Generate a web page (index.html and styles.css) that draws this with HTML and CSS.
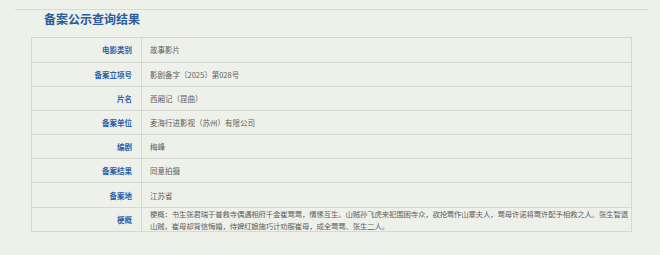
FILE: index.html
```html
<!DOCTYPE html>
<html lang="zh">
<head>
<meta charset="utf-8">
<link rel="stylesheet" href="styles.css">
</head>
<body>
<div class="panel">
  <h1 class="title">备案公示查询结果</h1>
  <div class="table">
    <div class="row"><div class="label">电影类别</div><div class="value">故事影片</div></div>
    <div class="row"><div class="label">备案立项号</div><div class="value">影剧备字〔2025〕第028号</div></div>
    <div class="row"><div class="label">片名</div><div class="value">西厢记（昆曲）</div></div>
    <div class="row"><div class="label">备案单位</div><div class="value">麦海行进影视（苏州）有限公司</div></div>
    <div class="row"><div class="label">编剧</div><div class="value">梅峰</div></div>
    <div class="row"><div class="label">备案结果</div><div class="value">同意拍摄</div></div>
    <div class="row"><div class="label">备案地</div><div class="value">江苏省</div></div>
    <div class="row"><div class="label">梗概</div><div class="value multi">梗概：书生张君瑞于普救寺偶遇相府千金崔莺莺，情愫互生。山贼孙飞虎来犯围困寺众，欲抢莺作山寨夫人，莺母许诺将莺许配予相救之人。张生智退山贼，崔母却背信悔婚，侍婢红娘施巧计劝服崔母，成全莺莺、张生二人。</div></div>
  </div>
</div>
</body>
</html>
```

FILE: styles.css
```css
html, body {
  margin: 0;
  padding: 0;
  background: #eef0ea;
  font-family: "Noto Sans CJK SC", "Noto Sans", sans-serif;
}

.panel {
  margin: 9px 12px 0 15px;
  border-top: 1px solid #d8dad4;
}

.title {
  margin: 0;
  padding: 0 0 0 29px;
  height: 27px;
  line-height: 17px;
  font-size: 12px;
  font-weight: bold;
  color: #2b5c9c;
}

.table {
  margin-left: 16px;
  width: 599px;
  border: 1px solid #d6d8d2;
}

.row {
  display: grid;
  grid-template-columns: 110px 1fr;
  height: 23.16px;
  border-top: 1px solid #d6d8d2;
}

.row:first-child {
  border-top: none;
  height: 23.7px;
}

.label {
  border-right: 1px solid #d6d8d2;
  padding-right: 9px;
  font-size: 7.5px;
  font-weight: bold;
  color: #2f62ac;
  display: flex;
  align-items: center;
  justify-content: flex-end;
}

.value {
  padding-left: 8px;
  font-size: 7.5px;
  color: #606060;
  display: flex;
  align-items: center;
}

.value.multi {
  display: block;
  font-size: 7.4px;
  line-height: 11.5px;
  padding-top: 0.5px;
  letter-spacing: -0.15px;
}
```
